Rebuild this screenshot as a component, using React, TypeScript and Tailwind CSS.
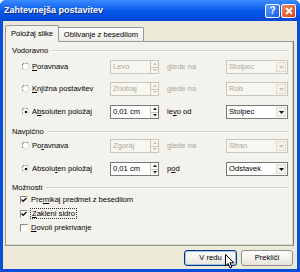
import React from 'react';

const font = "font-['Liberation_Sans',Arial,sans-serif]";

function Radio({ checked = false }: { checked?: boolean }) {
  return (
    <svg width="8" height="8" viewBox="0 0 8 8" className="shrink-0">
      <circle cx="4" cy="4" r="3.5" fill="white" />
      <path d="M0.9 6 A3.5 3.5 0 0 1 6 0.9" stroke="#7d7d74" strokeWidth="1" fill="none" />
      <path d="M6 0.9 A3.5 3.5 0 0 1 0.9 6" stroke="#d6d4c8" strokeWidth="1" fill="none" />
      {checked && <circle cx="4" cy="4" r="1.3" fill="#111" />}
    </svg>
  );
}

function Checkbox({ checked = false }: { checked?: boolean }) {
  return (
    <span className="box-border w-[8px] h-[8px] shrink-0 border border-[#8a8a80] border-r-[#f4f4f0] border-b-[#f4f4f0] bg-white flex items-center justify-center">
      {checked && (
        <svg width="6" height="6" viewBox="0 0 6 6">
          <path d="M0.5 2.6 L2.2 4.3 L5.5 0.9" stroke="#111" strokeWidth="1.4" fill="none" />
        </svg>
      )}
    </span>
  );
}

function Spin({ value, disabled = false }: { value: string; disabled?: boolean }) {
  const arrow = disabled ? '#c6c3b4' : '#222';
  return (
    <div
      className={`box-border w-[49px] h-[14px] flex border ${
        disabled ? 'border-[#c9c7ba] bg-[#f7f6f1] text-[#aca899]' : 'border-[#7a7a74] bg-white text-black'
      }`}
    >
      <span className="flex-1 pl-[2px] leading-[12px] truncate">{value}</span>
      <span className="w-[8px] flex flex-col border-l border-[#c9c7ba]">
        <span className="flex-1 flex items-center justify-center border-b border-[#c9c7ba]">
          <svg width="4" height="3" viewBox="0 0 4 3">
            <path d="M0 3 L2 0.5 L4 3 Z" fill={arrow} />
          </svg>
        </span>
        <span className="flex-1 flex items-center justify-center">
          <svg width="4" height="3" viewBox="0 0 4 3">
            <path d="M0 0 L2 2.5 L4 0 Z" fill={arrow} />
          </svg>
        </span>
      </span>
    </div>
  );
}

function Select({ value, disabled = false }: { value: string; disabled?: boolean }) {
  return (
    <div
      className={`box-border w-[62px] h-[14px] flex border ${
        disabled ? 'border-[#c9c7ba] bg-[#f7f6f1] text-[#aca899]' : 'border-[#7a7a74] bg-white text-black'
      }`}
    >
      <span className="flex-1 pl-[2px] leading-[12px] truncate">{value}</span>
      <span className="w-[10px] my-[1px] mr-[1px] flex items-center justify-center bg-[#f3f2ec] border border-[#e0ded2]">
        <svg width="5" height="3" viewBox="0 0 5 3">
          <path d="M0 0 L5 0 L2.5 3 Z" fill={disabled ? '#c6c3b4' : '#111'} />
        </svg>
      </span>
    </div>
  );
}

function Header({ label }: { label: string }) {
  return (
    <div className="h-[12px] flex items-center pl-[6px] pr-[6px]">
      <span>{label}</span>
      <span className="flex-1 ml-[4px] border-t border-[#d0d0bf] border-b border-b-white h-0" />
    </div>
  );
}

function Row({
  checked,
  disabled,
  label,
  value,
  mid,
  select,
  className,
}: {
  checked?: boolean;
  disabled?: boolean;
  label: React.ReactNode;
  value: string;
  mid: React.ReactNode;
  select: string;
  className: string;
}) {
  return (
    <div className={`flex items-center ${className}`}>
      <span className="ml-[16px] flex">
        <Radio checked={checked} />
      </span>
      <span className="ml-[1px] w-[79px] pl-[1px]">{label}</span>
      <Spin value={value} disabled={disabled} />
      <span className={`ml-[8px] w-[59px] ${disabled ? 'text-[#aca899]' : ''}`}>{mid}</span>
      <Select value={select} disabled={disabled} />
    </div>
  );
}

function CheckRow({
  checked,
  children,
  className,
}: {
  checked?: boolean;
  children: React.ReactNode;
  className: string;
}) {
  return (
    <div className={`flex items-center h-[12px] ${className}`}>
      <span className="ml-[14px]">
        <Checkbox checked={checked} />
      </span>
      <span className="ml-[3px]">{children}</span>
    </div>
  );
}

export default function App() {
  return (
    <div
      className={`relative w-[300px] h-[272px] flex flex-col bg-[#0a4fd8] rounded-t-[6px] overflow-hidden text-[7.6px] text-black ${font}`}
    >
      {/* title bar */}
      <div className="h-[21px] shrink-0 flex items-center bg-gradient-to-b from-[#3b8cff] via-[#0658ea] to-[#0347d6] pl-[4px] pr-[4px]">
        <span className="flex-1 text-white font-bold text-[9px] [text-shadow:1px_1px_0_#0a2a80]">
          Zahtevnejša postavitev
        </span>
        <div className="flex gap-[1px]">
          <span className="box-border w-[15px] h-[14px] rounded-[2px] border border-white bg-gradient-to-br from-[#5b9bff] to-[#1a5fe6] flex items-center justify-center text-white font-bold text-[10px] leading-none">
            ?
          </span>
          <span className="box-border w-[15px] h-[14px] rounded-[2px] border border-white bg-gradient-to-br from-[#ee8a62] to-[#d6401a] flex items-center justify-center">
            <svg width="8" height="8" viewBox="0 0 8 8">
              <path d="M1 1 L7 7 M7 1 L1 7" stroke="white" strokeWidth="1.8" />
            </svg>
          </span>
        </div>
      </div>

      {/* body */}
      <div className="flex-1 mx-[3px] mb-[3px] bg-[#ece9d8] flex flex-col px-[2px]">
        {/* tabs */}
        <div className="mt-[4px] h-[16px] flex items-end">
          <div className="relative z-10 box-border h-[17px] -mb-[1px] w-[54px] border border-b-0 border-[#919b9c] rounded-t-[2px] bg-[#f3f2ec] flex items-center justify-center">
            Položaj slike
          </div>
          <div className="box-border h-[14px] w-[85px] border border-b-0 border-l-0 border-[#919b9c] rounded-tr-[2px] bg-gradient-to-b from-white to-[#ecebe5] flex items-center justify-center">
            Oblivanje z besedilom
          </div>
        </div>

        {/* panel */}
        <div className="box-border h-[205px] w-[289px] border border-[#919b9c] border-r-[#6f7777] bg-[#f3f2ec] flex flex-col shadow-[inset_-1px_-1px_0_#d8d6ca]">
          <div className="mt-[3px]">
            <Header label="Vodoravno" />
          </div>
          <Row
            className="h-[20px]"
            disabled
            label={
              <>
                <u>P</u>oravnava
              </>
            }
            value="Levo"
            mid="glede na"
            select="Stolpec"
          />
          <Row
            className="h-[22px] mt-[1px]"
            disabled
            label={
              <>
                <u>K</u>njižna postavitev
              </>
            }
            value="Znotraj"
            mid="glede na"
            select="Rob"
          />
          <Row
            className="h-[22px] mt-[1px]"
            checked
            label={
              <>
                A<u>b</u>soluten položaj
              </>
            }
            value="0,01 cm"
            mid={
              <>
                le<u>v</u>o od
              </>
            }
            select="Stolpec"
          />
          <div className="mt-[3px]">
            <Header label="Navpično" />
          </div>
          <Row
            className="h-[16px]"
            disabled
            label={
              <>
                Po<u>r</u>avnava
              </>
            }
            value="Zgoraj"
            mid="glede na"
            select="Stran"
          />
          <Row
            className="h-[22px] mt-[4px]"
            checked
            label={
              <>
                Absolu<u>t</u>en položaj
              </>
            }
            value="0,01 cm"
            mid={
              <>
                p<u>o</u>d
              </>
            }
            select="Odstavek"
          />
          <div className="mt-[2px]">
            <Header label="Možnosti" />
          </div>
          <CheckRow checked className="">
            Pre<u>m</u>ikaj predmet z besedilom
          </CheckRow>
          <CheckRow checked className="mt-[2px]">
            <span className="outline outline-1 outline-dotted outline-[#333] px-[1px]">
              <u>Z</u>akleni sidro
            </span>
          </CheckRow>
          <CheckRow className="mt-[2px]">
            <u>D</u>ovoli prekrivanje
          </CheckRow>
        </div>

        {/* buttons */}
        <div className="mt-[4px] h-[16px] flex justify-end gap-[4px] pr-[2px]">
          <button className="box-border w-[53px] h-[16px] rounded-[3px] border border-[#003c74] bg-gradient-to-b from-white to-[#e6e4da] shadow-[inset_0_0_0_1px_#9fbff5] flex items-center justify-center text-[7.6px]">
            V redu
          </button>
          <button className="box-border w-[52px] h-[16px] rounded-[3px] border border-[#8e8f8f] bg-gradient-to-b from-white to-[#e6e4da] flex items-center justify-center text-[7.6px]">
            Prekliči
          </button>
        </div>
      </div>

      {/* mouse pointer */}
      <svg className="absolute left-[225px] top-[254px]" width="10" height="16" viewBox="0 0 10 16">
        <path d="M0.5 0.5 L0.5 12 L3.2 9.5 L5 14 L6.8 13.2 L5 8.8 L8.8 8.8 Z" fill="white" stroke="black" strokeWidth="1" />
      </svg>
    </div>
  );
}
